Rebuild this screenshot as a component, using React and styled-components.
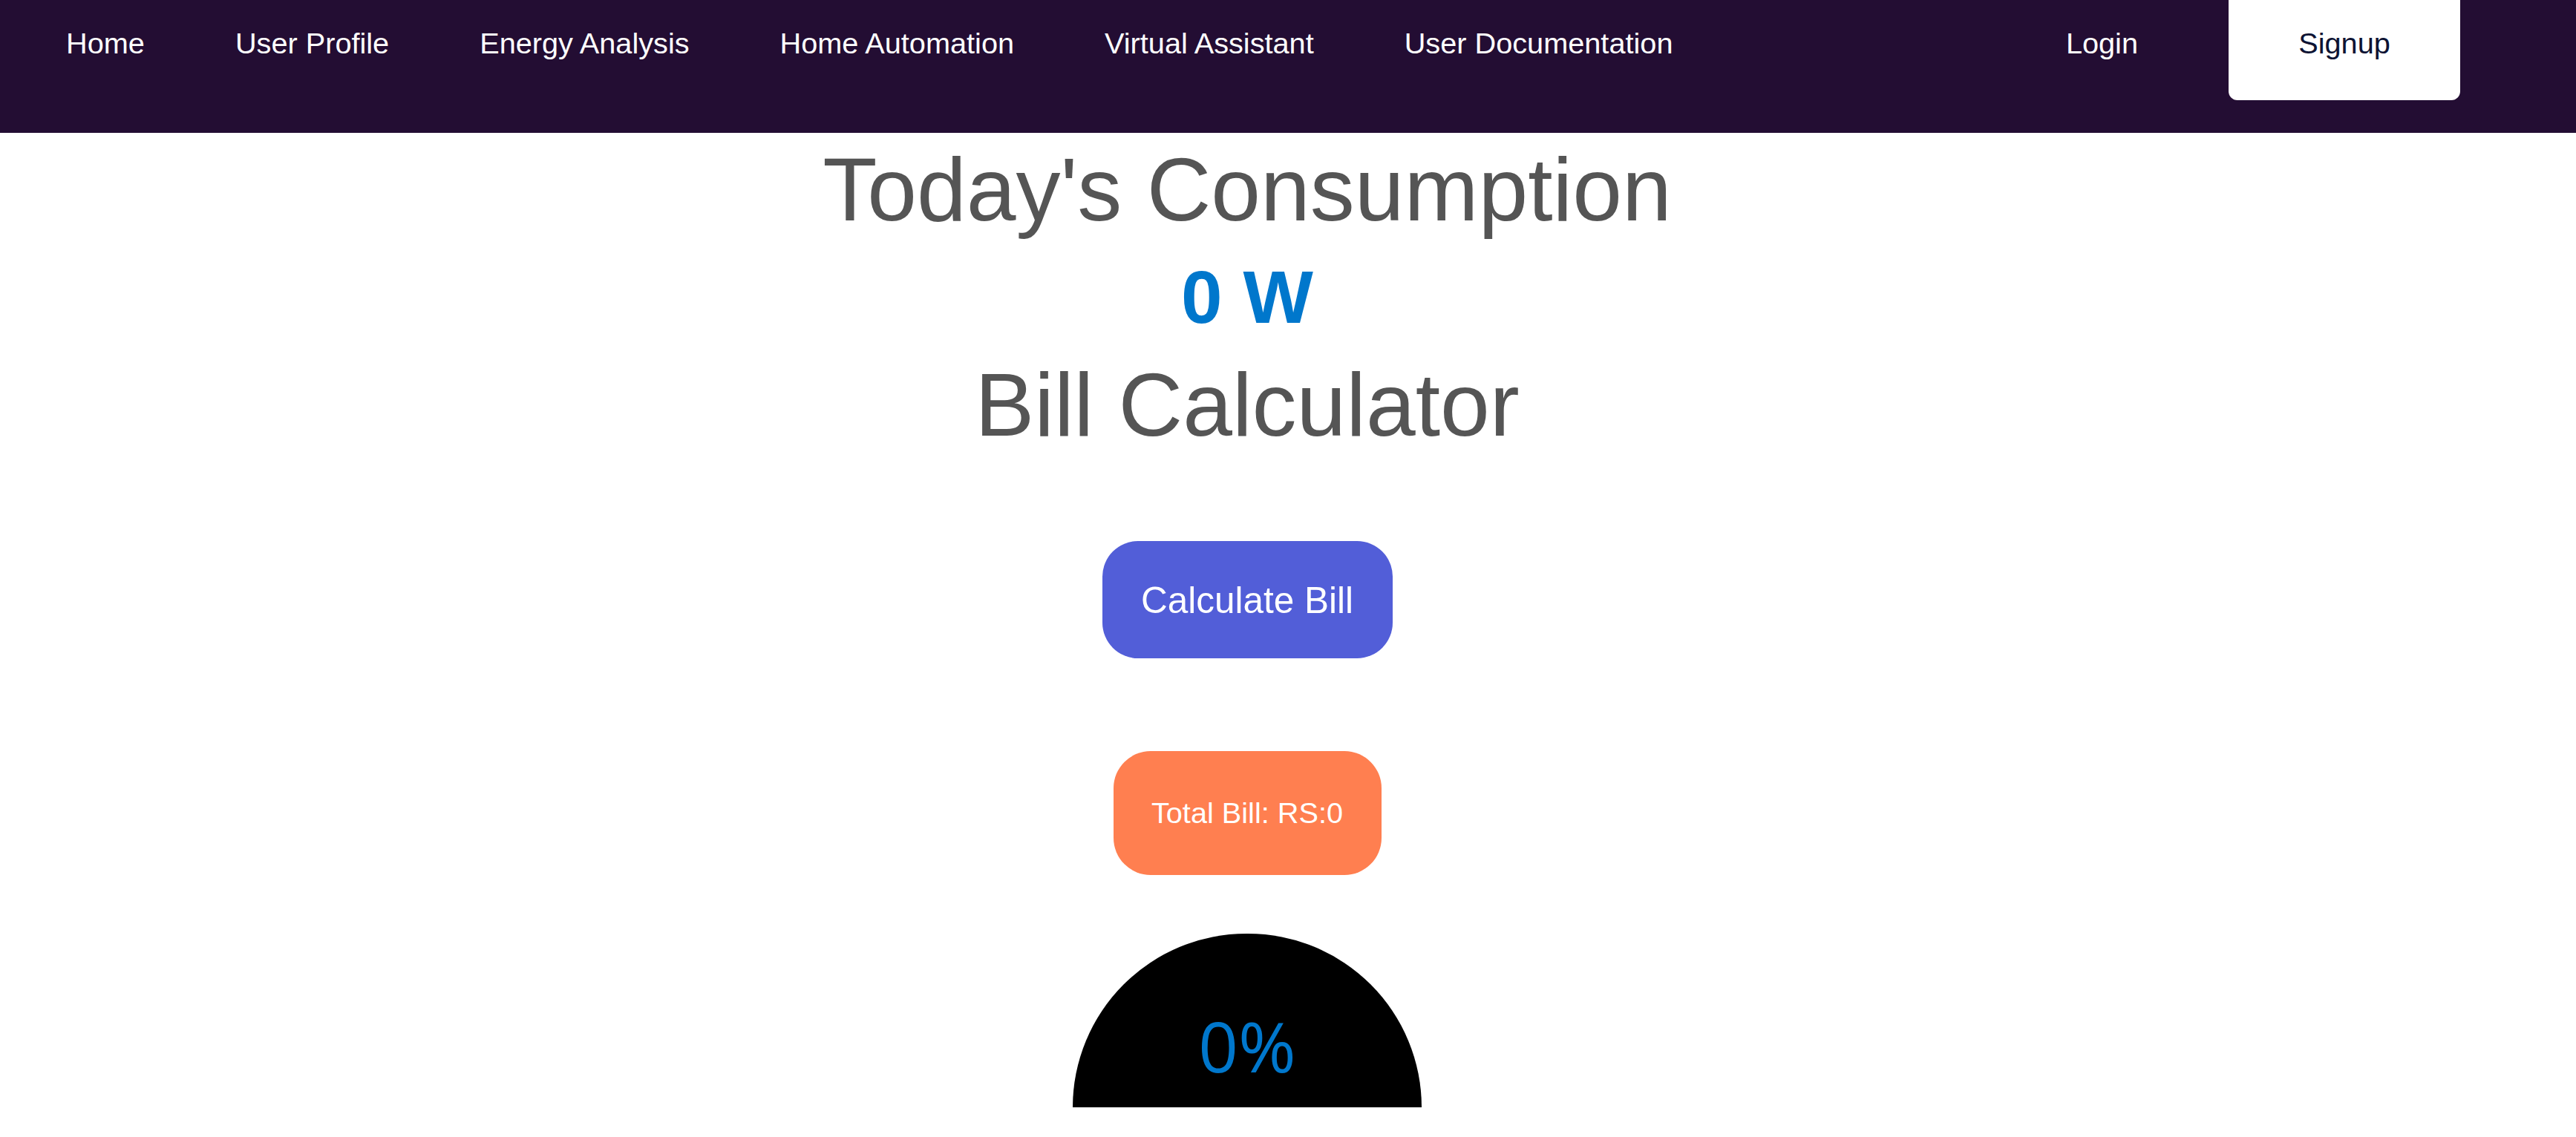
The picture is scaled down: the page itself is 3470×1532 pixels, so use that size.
import React from "react";
import styled, { createGlobalStyle } from "styled-components";

const GlobalStyle = createGlobalStyle`
  html, body { margin: 0; padding: 0; background: #ffffff; }
  body { font-family: "Liberation Sans", Arial, sans-serif; }
  * { box-sizing: border-box; }
`;

const NavBar = styled.nav`
  display: flex;
  align-items: flex-start;
  height: 179px;
  background: #230d33;
  padding: 0 156px 0 89px;
`;

const NavGroup = styled.div`
  display: flex;
  align-items: flex-start;
  gap: 122px;
  margin-left: ${(p) => (p.$right ? "auto" : "0")};
`;

const NavLink = styled.a`
  display: block;
  padding-top: 36px;
  font-size: 39.7px;
  line-height: 1.15;
  color: #ffffff;
  text-decoration: none;
  white-space: nowrap;
`;

const SignupButton = styled.a`
  display: block;
  height: 135px;
  width: 312px;
  padding-top: 36px;
  text-align: center;
  font-size: 39.7px;
  line-height: 1.15;
  color: #0d1333;
  background: #ffffff;
  border-radius: 0 0 12px 12px;
  text-decoration: none;
`;

const Main = styled.main`
  width: 3360px;
  display: flex;
  flex-direction: column;
  align-items: center;
`;

const Title = styled.h1`
  margin: ${(p) => p.$mt}px 0 0;
  font-size: 120px;
  font-weight: 400;
  line-height: 1.13;
  color: #555555;
`;

const Watts = styled.div`
  margin-top: 19px;
  font-size: 100px;
  font-weight: 700;
  line-height: 1.15;
  color: #0077cc;
`;

const CalcButton = styled.button`
  margin-top: 116px;
  height: 158px;
  width: 391px;
  border: none;
  border-radius: 48px;
  background: #525ed8;
  color: #ffffff;
  font-family: "Liberation Sans", Arial, sans-serif;
  font-size: 49.5px;
  cursor: pointer;
`;

const TotalBill = styled.div`
  margin-top: 125px;
  height: 167px;
  width: 361px;
  border-radius: 50px;
  background: #ff7f50;
  color: #ffffff;
  font-size: 39.7px;
  display: flex;
  align-items: center;
  justify-content: center;
`;

const Gauge = styled.div`
  margin-top: 79px;
  width: 470px;
  height: 234px;
  border-radius: 235px 235px 0 0;
  background: #000000;
  display: flex;
  justify-content: center;
  padding-top: 104px;
`;

const GaugeValue = styled.span`
  font-family: "Open Sans", "Noto Sans", sans-serif;
  font-size: 94px;
  line-height: 1;
  color: #0077cc;
`;

export default function App() {
  const consumption = 0;
  const bill = 0;
  return (
    <>
      <GlobalStyle />
      <NavBar>
        <NavGroup>
          <NavLink href="#">Home</NavLink>
          <NavLink href="#">User Profile</NavLink>
          <NavLink href="#">Energy Analysis</NavLink>
          <NavLink href="#">Home Automation</NavLink>
          <NavLink href="#">Virtual Assistant</NavLink>
          <NavLink href="#">User Documentation</NavLink>
        </NavGroup>
        <NavGroup $right>
          <NavLink href="#">Login</NavLink>
          <SignupButton href="#">Signup</SignupButton>
        </NavGroup>
      </NavBar>
      <Main>
        <Title $mt={9}>Today's Consumption</Title>
        <Watts>{consumption} W</Watts>
        <Title $mt={20}>Bill Calculator</Title>
        <CalcButton>Calculate Bill</CalcButton>
        <TotalBill>Total Bill: RS:{bill}</TotalBill>
        <Gauge>
          <GaugeValue>0%</GaugeValue>
        </Gauge>
      </Main>
    </>
  );
}
